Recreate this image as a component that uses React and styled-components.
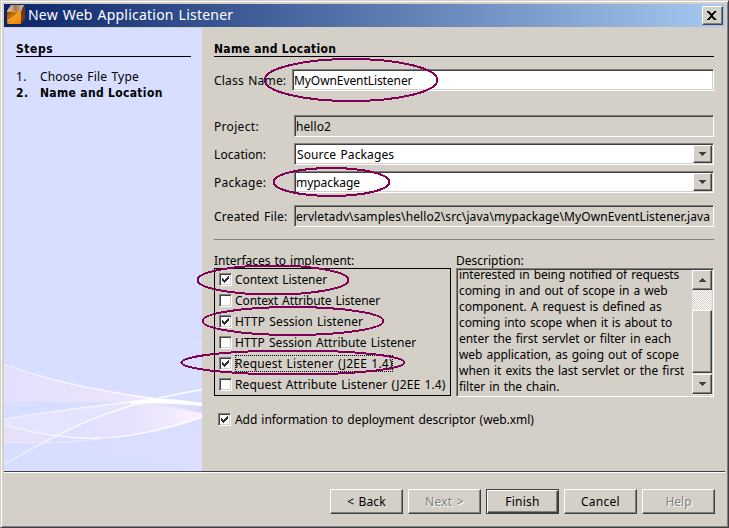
import React from "react";
import styled, { createGlobalStyle, css } from "styled-components";

const face = "#d4d0c8";
const shadow = "#808080";
const dark = "#404040";

const GlobalStyle = createGlobalStyle`
  * { box-sizing: border-box; }
  body {
    margin: 0;
    overflow: hidden;
    background: ${face};
    color: #000;
    font: 12px/16px "Noto Sans", Tahoma, sans-serif;
  }
`;

const raised = css`
  border: 1px solid;
  border-color: #fff ${dark} ${dark} #fff;
  box-shadow: inset -1px -1px 0 ${shadow};
  background: ${face};
`;

const sunken = css`
  border: 1px solid;
  border-color: ${shadow} #fff #fff ${shadow};
  box-shadow: inset 1px 1px 0 ${dark}, inset -1px -1px 0 ${face};
`;

const Text = styled.span`
  white-space: pre;
  word-spacing: 1px;
  letter-spacing: ${(p) => p.$track || 0}px;
`;

const BoldText = styled(Text)`
  font-family: "DejaVu Sans Condensed", Tahoma, sans-serif;
  font-weight: 700;
  word-spacing: 0;
`;

const Window = styled.div`
  position: relative;
  display: flex;
  flex-direction: column;
  width: 729px;
  height: 528px;
  padding: 3px 2px 0 3px;
  background: ${face};
  border: 1px solid;
  border-color: ${face} ${dark} ${dark} ${face};
  box-shadow: inset 1px 1px 0 #fff, inset -1px -1px 0 ${shadow};
`;

const TitleBar = styled.header`
  display: flex;
  align-items: center;
  width: 721px;
  height: 23px;
  padding: 0 2px 1px;
  background: linear-gradient(90deg, #0a246a, #a6caf0);
`;

const Title = styled(Text)`
  flex: 1;
  margin-left: 2px;
  color: #fff;
  font-size: 14px;
  line-height: 22px;
`;

const CloseButton = styled.button`
  ${raised}
  display: grid;
  place-items: center;
  width: 21px;
  height: 19px;
  padding: 0 1px 0 0;
`;

const Body = styled.div`
  display: flex;
  width: 721px;
  height: 444px;
  margin-top: 1px;
  border-bottom: 1px solid ${dark};
  box-shadow: 0 1px 0 #fff;
`;

const Sidebar = styled.aside`
  position: relative;
  width: 198px;
  padding: 13px 11px 0 12px;
  background: #d8deff;
`;

const Waves = styled.svg`
  position: absolute;
  left: 0;
  bottom: 0;
`;

const Heading = styled.h2`
  height: 16px;
  margin: 0;
  border-bottom: 1px solid #000;
  font-size: 12px;
  line-height: 15px;
`;

const Steps = styled.ol`
  margin: 12px 0 0;
  padding: 0;
  list-style: none;
`;

const Step = styled.li`
  display: grid;
  grid-template-columns: 24px 1fr;
  height: 16px;
`;

const Main = styled.main`
  width: 512px;
  padding: 13px 0 0 12px;
`;

const FieldRow = styled.div`
  display: grid;
  grid-template-columns: ${(p) => p.$label || 80}px 1fr;
  height: 22px;
  margin-top: ${(p) => p.$gap}px;
  line-height: 24px;
`;

const Field = styled.div`
  ${sunken}
  display: flex;
  justify-content: space-between;
  height: 22px;
  padding: 1px 1px 1px ${(p) => p.$inset || 1}px;
  overflow: hidden;
  background: ${(p) => (p.$readOnly ? face : "#fff")};
  line-height: 20px;
`;

const ArrowButton = styled.div`
  ${raised}
  display: grid;
  place-items: center;
  width: ${(p) => p.$w || 19}px;
  height: ${(p) => p.$h || 18}px;
`;

const Divider = styled.div`
  height: 1px;
  margin: 12px 0;
  width: 500px;
  background: ${shadow};
`;

const Columns = styled.div`
  display: grid;
  grid-template-columns: 237px 258px;
  gap: 5px;
`;

const Caption = styled.div`
  height: 16px;
  line-height: 18px;
`;

const CheckList = styled.div`
  height: 128px;
  padding-left: 4px;
  border: 1px solid #000;
`;

const CheckRow = styled.div`
  display: flex;
  align-items: center;
  gap: ${(p) => p.$gap || 3}px;
  height: 21px;
`;

const Standalone = styled(CheckRow)`
  height: 13px;
  margin: 16px 0 0 4px;
`;

const CheckBox = styled.span`
  ${sunken}
  display: grid;
  place-items: center;
  width: 13px;
  height: 13px;
  background: #fff;
`;

const Focusable = styled.span`
  height: 17px;
  line-height: 18px;
  outline: ${(p) => (p.$focused ? "1px dotted #000" : "none")};
  outline-offset: -1px;
`;

const Description = styled.div`
  ${sunken}
  display: flex;
  justify-content: space-between;
  height: 129px;
  padding: 1px;
  overflow: hidden;
`;

const Paragraph = styled.div`
  display: flex;
  flex-direction: column;
  height: 128px;
  margin: -3px 0 0 1px;
`;

const DescriptionView = styled.div`
  height: 125px;
  overflow: hidden;
`;

const ScrollBar = styled.div`
  display: flex;
  flex-direction: column;
  width: 20px;
  background: repeating-conic-gradient(#fff 0 25%, ${face} 0 50%) 0 0 / 2px 2px;
`;

const Thumb = styled.div`
  ${raised}
  height: 63px;
  margin: 20px 0 1px;
`;

const Footer = styled.footer`
  display: flex;
  justify-content: flex-end;
  gap: 5px;
  width: 721px;
  padding: 17px 10px 0 0;
`;

const Button = styled.button`
  ${raised}
  width: 73px;
  height: 25px;
  padding: 0;
  font: inherit;
  line-height: 22px;
  color: ${(p) => (p.disabled ? shadow : "#000")};
  text-shadow: ${(p) => (p.disabled ? "1px 1px 0 #fff" : "none")};
  ${(p) =>
    p.$primary &&
    css`
      border-color: ${dark};
      box-shadow: inset 1px 1px 0 #fff, inset -1px -1px 0 ${dark}, inset -2px -2px 0 ${shadow};
    `}
`;

const Annotations = styled.svg`
  position: absolute;
  left: -1px;
  top: -1px;
  pointer-events: none;
  fill: none;
  stroke: #800058;
  stroke-width: 2;
`;

function BoxIcon() {
  return (
    <svg width="20" height="20" viewBox="0 0 20 20">
      <defs>
        <linearGradient id="front" x1="0" y1="0" x2="1" y2="1">
          <stop offset="0" stopColor="#7c4008" />
          <stop offset="0.35" stopColor="#c87010" />
          <stop offset="0.6" stopColor="#f89818" />
          <stop offset="1" stopColor="#e87800" />
        </linearGradient>
        <linearGradient id="lid" x1="0" y1="0" x2="1" y2="0">
          <stop offset="0" stopColor="#e8d8c8" />
          <stop offset="0.5" stopColor="#a87850" />
          <stop offset="1" stopColor="#d8c0a8" />
        </linearGradient>
      </defs>
      <path d="M1 6 5 0H18L15 7Z" fill="url(#lid)" />
      <path d="M1 6H15V19H2L1 18Z" fill="url(#front)" />
      <path d="M15 7 19 1V14L15 19Z" fill="#7c3808" />
      <path d="M2 16 8 12 14 7" fill="none" stroke="#ffc040" strokeWidth="1" />
      <path d="M1 6.5H15" stroke="#e09840" />
    </svg>
  );
}

function Arrow({ up }) {
  return (
    <svg width="9" height="5" viewBox="0 0 9 5" shapeRendering="crispEdges">
      <path
        d={up ? "M4 0h1v1h1v1h1v1h1v1H1V3h1V2h1V1h1z" : "M1 0h7v1H7v1H6v1H5v1H4V3H3V2H2V1H1z"}
        fill={dark}
      />
    </svg>
  );
}

function Check({ on }) {
  return (
    <CheckBox>
      {on && (
        <svg width="7" height="7" viewBox="0 0 7 7" shapeRendering="crispEdges">
          <path d="M0 2h1v1h1v1h1V3h1V2h1V1h1V0h1v3H6v1H5v1H4v1H3v1H2V6H1V5H0z" fill="#303030" />
        </svg>
      )}
    </CheckBox>
  );
}

function SidebarWaves() {
  return (
    <Waves width="198" height="143" viewBox="0 328 198 143">
      <defs>
        <linearGradient id="pinkLeft" x1="0" y1="0" x2="1" y2="0">
          <stop offset="0" stopColor="#e2dffd" />
          <stop offset="0.6" stopColor="#ece4fc" />
          <stop offset="1" stopColor="#ffffff" />
        </linearGradient>
        <linearGradient id="pinkRight" x1="0" y1="0" x2="1" y2="0">
          <stop offset="0" stopColor="#dcdfff" />
          <stop offset="0.55" stopColor="#e8e2fc" />
          <stop offset="1" stopColor="#faf2ff" />
        </linearGradient>
        <linearGradient id="blueBand" x1="0" y1="0" x2="1" y2="0">
          <stop offset="0" stopColor="#eeecff" />
          <stop offset="1" stopColor="#d6d9fa" />
        </linearGradient>
        <linearGradient id="glow" gradientUnits="userSpaceOnUse" x1="0" y1="0" x2="198" y2="0">
          <stop offset="0" stopColor="#fff" stopOpacity="0.5" />
          <stop offset="0.7" stopColor="#fff" />
        </linearGradient>
      </defs>
      <path d="M70 445Q140 441 198 418V471H190Q130 458 70 445Z" fill="#dcdeff" />
      <path d="M0 364Q70 391 198 404L150 402H0Z" fill="url(#pinkLeft)" />
      <path d="M0 419Q80 406 150 400Q90 418 54 437Q20 432 0 425Z" fill="#e4e4ff" />
      <path d="M0 426Q30 435 54 437L38 443H0Z" fill="#e7e0fb" />
      <path d="M54 437Q100 411 148 402L198 413V418Q120 445 54 437Z" fill="url(#pinkRight)" />
      <path d="M132 404 198 405V413Q160 405 132 405Z" fill="url(#blueBand)" />
      <path d="M126 401Q160 396 198 403V406Q160 402 126 404Z" fill="#fff" />
      <g fill="none" stroke="url(#glow)" strokeWidth="1.3">
        <path d="M0 364Q70 391 198 404" />
        <path d="M0 419Q80 406 150 400" strokeOpacity="0.8" />
        <path d="M0 464C50 438 90 408 198 389.5" />
        <path d="M0 425C60 441 110 447 198 417" />
        <path d="M0 442Q60 445 110 437" stroke="#f6e9fc" strokeWidth="1" />
      </g>
      <path d="M184 338Q190 340 198 343" fill="none" stroke="#e4e6ff" />
    </Waves>
  );
}

const interfaces = [
  { label: "Context Listener", on: true, track: -0.08 },
  { label: "Context Attribute Listener", track: -0.1 },
  { label: "HTTP Session Listener", on: true, track: 0.1 },
  { label: "HTTP Session Attribute Listener", track: 0.03 },
  { label: "Request Listener (J2EE 1.4)", on: true, track: 0.2, focused: true },
  { label: "Request Attribute Listener (J2EE 1.4)", track: 0.1 },
];

const description = [
  ["interested in being notified of requests", -0.1],
  ["coming in and out of scope in a web", -0.08],
  ["component. A request is defined as", -0.03],
  ["coming into scope when it is about to", -0.13],
  ["enter the first servlet or filter in each", -0.03],
  ["web application, as going out of scope", -0.06],
  ["when it exits the last servlet or the first", -0.03],
  ["filter in the chain.", -0.05],
];

export default function App() {
  return (
    <Window>
      <GlobalStyle />
      <TitleBar>
        <BoxIcon />
        <Title $track={0.22}>New Web Application Listener</Title>
        <CloseButton aria-label="Close">
          <svg width="10" height="9" viewBox="0 0 10 9" shapeRendering="crispEdges">
            <path
              d="M0 0h2v1h1v1h1v1h1V2h1V1h1V0h2v1H8v1H7v1H6v1H5.5v1H6v1h1v1h1v1h1v1H7V8H6V7H5V6H4v1H3v1H2v1H0V8h1V7h1V6h1V5h.5V4H3V3H2V2H1V1H0z"
              fill="#000"
              stroke="#000"
              strokeWidth="0.4"
            />
          </svg>
        </CloseButton>
      </TitleBar>

      <Body>
        <Sidebar>
          <SidebarWaves />
          <Heading><BoldText $track={0.55}>Steps</BoldText></Heading>
          <Steps>
            <Step>
              <Text $track={0.3}>1.</Text>
              <Text $track={0.17}>Choose File Type</Text>
            </Step>
            <Step>
              <BoldText $track={0.5}>2.</BoldText>
              <BoldText $track={0.33}>Name and Location</BoldText>
            </Step>
          </Steps>
        </Sidebar>

        <Main>
          <Heading><BoldText $track={0.3}>Name and Location</BoldText></Heading>
          <FieldRow $label={78} $gap={12}>
            <Text $track={0.2}>Class Name:</Text>
            <Field><Text $track={-0.08}>MyOwnEventListener</Text></Field>
          </FieldRow>
          <FieldRow $gap={24}>
            <Text $track={0.32}>Project:</Text>
            <Field $readOnly><Text $track={0.08}>hello2</Text></Field>
          </FieldRow>
          <FieldRow $gap={6}>
            <Text $track={0.09}>Location:</Text>
            <Field $inset={2}>
              <Text $track={0.12}>Source Packages</Text>
              <ArrowButton><Arrow /></ArrowButton>
            </Field>
          </FieldRow>
          <FieldRow $gap={6}>
            <Text $track={0.24}>Package:</Text>
            <Field>
              <Text $track={-0.05}>mypackage</Text>
              <ArrowButton><Arrow /></ArrowButton>
            </Field>
          </FieldRow>
          <FieldRow $gap={12}>
            <Text $track={0.2}>Created File:</Text>
            <Field $readOnly>
              <Text $track={0.1}>{"ervletadv\\samples\\hello2\\src\\java\\mypackage\\MyOwnEventListener.java"}</Text>
            </Field>
          </FieldRow>
          <Divider />
          <Columns>
            <div>
              <Caption><Text $track={-0.03}>Interfaces to implement:</Text></Caption>
              <CheckList>
                {interfaces.map((item) => (
                  <CheckRow key={item.label}>
                    <Check on={item.on} />
                    <Focusable $focused={item.focused}>
                      <Text $track={item.track}>{item.label}</Text>
                    </Focusable>
                  </CheckRow>
                ))}
              </CheckList>
            </div>
            <div>
              <Caption><Text>Description:</Text></Caption>
              <Description>
                <DescriptionView>
                  <Paragraph>
                    {description.map(([line, track]) => (
                      <Text key={line} $track={track}>{line}</Text>
                    ))}
                  </Paragraph>
                </DescriptionView>
                <ScrollBar>
                  <ArrowButton $w={20} $h={20}><Arrow up /></ArrowButton>
                  <Thumb />
                  <ArrowButton $w={20} $h={20}><Arrow /></ArrowButton>
                </ScrollBar>
              </Description>
            </div>
          </Columns>
          <Standalone $gap={4}>
            <Check on />
            <Text $track={-0.05}>Add information to deployment descriptor (web.xml)</Text>
          </Standalone>
        </Main>
      </Body>

      <Footer>
        <Button><Text $track={0.15}>{"< Back"}</Text></Button>
        <Button disabled><Text $track={0.28}>{"Next >"}</Text></Button>
        <Button $primary><Text $track={0.25}>Finish</Text></Button>
        <Button><Text $track={0.27}>Cancel</Text></Button>
        <Button disabled><Text>Help</Text></Button>
      </Footer>

      <Annotations width="729" height="528" viewBox="0 0 729 528" shapeRendering="crispEdges">
        <ellipse cx="351" cy="80" rx="86.5" ry="21" />
        <ellipse cx="331.5" cy="182" rx="58" ry="14" />
        <ellipse cx="273" cy="280" rx="75.5" ry="14.5" />
        <ellipse cx="293" cy="321" rx="90.5" ry="14" />
        <ellipse cx="293" cy="362.5" rx="111.5" ry="12" />
      </Annotations>
    </Window>
  );
}
